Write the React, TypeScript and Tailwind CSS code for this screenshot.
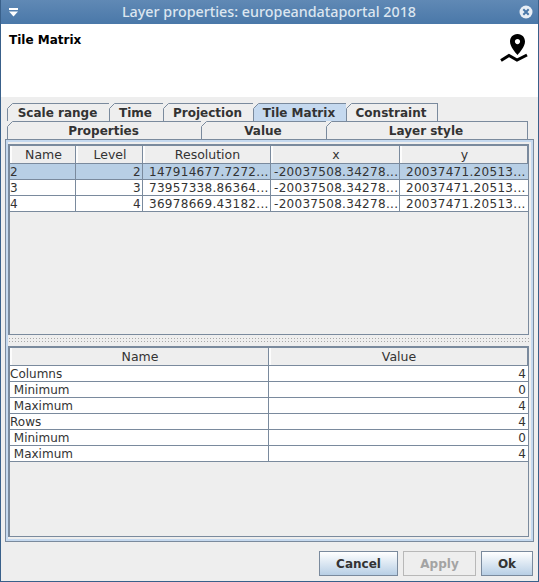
import React from 'react';

const topTabs = [
  { label: 'Scale range', w: 'w-[103px]' },
  { label: 'Time', w: 'w-[55px]' },
  { label: 'Projection', w: 'w-[91px]' },
  { label: 'Tile Matrix', w: 'w-[94px]', active: true },
  { label: 'Constraint', w: 'w-[92px]' },
];

const bottomTabs = [
  { label: 'Properties', w: 'w-[195px]' },
  { label: 'Value', w: 'w-[126px]' },
  { label: 'Layer style', w: 'w-[202px]' },
];

const levels = [
  ['2', '2', '147914677.7272...', '-20037508.34278...', '20037471.20513...'],
  ['3', '3', '73957338.86364...', '-20037508.34278...', '20037471.20513...'],
  ['4', '4', '36978669.43182...', '-20037508.34278...', '20037471.20513...'],
];

const values = [
  ['Columns', '4'],
  ['\u00a0Minimum', '0'],
  ['\u00a0Maximum', '4'],
  ['Rows', '4'],
  ['\u00a0Minimum', '0'],
  ['\u00a0Maximum', '4'],
];

const Tab = ({ label, w, active }: { label: string; w: string; active?: boolean }) => (
  <div
    className={`relative h-[18px] -mr-px flex items-center justify-center border border-b-0 border-[#7a8a9d] pr-[2px] text-[12px] font-bold text-[#333333] ${w} ${
      active ? 'bg-[#c5d9ef]' : 'bg-[#eeeeee]'
    }`}
  >
    <svg className="absolute -left-px -top-px" width="6" height="6" viewBox="0 0 6 6">
      <path d="M0 0H6L0 6Z" fill="#eeeeee" />
      <path d="M0.5 5.5L5.5 0.5" stroke="#7a8a9d" strokeWidth="1" />
    </svg>
    {label}
  </div>
);

const HeaderCell = ({ label, w }: { label: string; w: string }) => (
  <div className={`flex h-full items-center justify-center border-r border-[#7a8a9d] border-l-2 border-l-white/80 pt-[2px] text-[12.5px] text-[#333333] ${w}`}>
    {label}
  </div>
);

const Button = ({ label, w, disabled }: { label: string; w: string; disabled?: boolean }) => (
  <div
    className={`flex h-[25px] items-center justify-center border text-[12px] font-bold ${w} ${
      disabled
        ? 'border-[#b8b8b8] bg-[#eeeeee] text-[#a3a3a3]'
        : 'border-[#7a8a9d] bg-gradient-to-b from-[#ffffff] to-[#b8cfe5] text-[#333333]'
    }`}
  >
    {label}
  </div>
);

export default function App() {
  return (
    <div className="flex h-[582px] w-[539px] flex-col border border-t-0 border-[#39608a] bg-[#eeeeee] font-['DejaVu_Sans',sans-serif]">
      {/* title bar */}
      <div className="flex h-6 shrink-0 items-center justify-between bg-gradient-to-b from-[#6089b5] to-[#4a78a9] pl-2 pr-[5px]">
        <svg width="10" height="9" viewBox="0 0 10 9">
          <rect x="0" y="0" width="9" height="2" fill="#ffffff" />
          <path d="M0 3.5H9L4.5 8.5Z" fill="#ffffff" />
        </svg>
        <span className="text-[14.3px] font-medium text-[#dce6f0] font-['Noto_Sans',sans-serif]">Layer properties: europeandataportal 2018</span>
        <svg width="14" height="14" viewBox="0 0 14 14">
          <circle cx="7" cy="7" r="6.5" fill="#e8eef5" />
          <path d="M4.3 4.3L9.7 9.7M9.7 4.3L4.3 9.7" stroke="#4a78a9" strokeWidth="2" />
        </svg>
      </div>

      {/* header */}
      <div className="flex h-[73px] shrink-0 justify-between bg-white pl-2 pr-[10px] pt-[8px]">
        <span className="text-[12px] font-bold leading-4 text-black">Tile Matrix</span>
        <svg className="mt-[2px]" width="28" height="30" viewBox="0 0 28 30">
          <path
            fillRule="evenodd"
            d="M17.5 0C12.6 0 10 3.8 10 7.6C10 12.5 15 18.5 17.5 21C20 18.5 25 12.5 25 7.6C25 3.8 22.4 0 17.5 0ZM17.5 5C19 5 20.1 6.1 20.1 7.6C20.1 9.1 19 10.2 17.5 10.2C16 10.2 14.9 9.1 14.9 7.6C14.9 6.1 16 5 17.5 5Z"
            fill="#000000"
          />
          <path d="M1 26.5L9 21.5L17 26L27 21" fill="none" stroke="#000000" strokeWidth="3" />
        </svg>
      </div>

      {/* tabs */}
      <div className="flex min-h-0 flex-1 flex-col pl-1 pr-[4px] pt-[6px]">
        <div className="flex pl-[2px]">
          {topTabs.map((t) => (
            <Tab key={t.label} {...t} />
          ))}
        </div>
        <div className="flex pl-[2px]">
          {bottomTabs.map((t) => (
            <Tab key={t.label} {...t} />
          ))}
        </div>

        <div className="flex h-[403px] flex-col border border-[#7a8a9d] bg-[#eeeeee]">
          <div className="flex min-h-0 flex-1 flex-col border-2 border-[#c5d9ef] pr-[2px] pt-[2px] pb-[2px]">
            {/* upper table */}
            <div className="flex h-[191px] shrink-0 flex-col border border-[#7a8a9d] border-t-2 border-l-2">
              <div className="flex h-[18px] shrink-0 border-b border-[#7a8a9d]">
                <HeaderCell label="Name" w="w-[66px]" />
                <HeaderCell label="Level" w="w-[67px]" />
                <HeaderCell label="Resolution" w="w-[128px]" />
                <HeaderCell label="x" w="w-[129px]" />
                <HeaderCell label="y" w="flex-1" />
              </div>
              {levels.map((row, i) => (
                <div
                  key={row[0]}
                  className={`flex h-4 shrink-0 border-b border-[#7a8a9d] text-[12px] leading-[17px] tracking-[0.3px] text-[#333333] ${
                    i === 0 ? 'bg-[#b8cfe5]' : 'bg-white'
                  }`}
                >
                  <div className="w-[66px] border-r border-[#7a8a9d]">{row[0]}</div>
                  <div className="w-[67px] border-r border-[#7a8a9d] pr-px text-right">{row[1]}</div>
                  <div className="w-[128px] border-r border-[#7a8a9d] pl-[6px]">{row[2]}</div>
                  <div className="w-[129px] border-r border-[#7a8a9d] pl-[3px]">{row[3]}</div>
                  <div className="flex-1 pl-[6px]">{row[4]}</div>
                </div>
              ))}
            </div>

            {/* split pane divider */}
            <div className="my-[2px] h-[7px] shrink-0 bg-[radial-gradient(#a8a8a8_0.6px,transparent_0.8px)] bg-[length:3px_3px]" />

            {/* lower table */}
            <div className="flex min-h-0 flex-1 flex-col border border-[#7a8a9d] border-t-2 border-l-2">
              <div className="flex h-[18px] shrink-0 border-b border-[#7a8a9d]">
                <HeaderCell label="Name" w="w-[259px]" />
                <HeaderCell label="Value" w="flex-1" />
              </div>
              {values.map((row, i) => (
                <div key={i} className="flex h-4 shrink-0 border-b border-[#7a8a9d] bg-white text-[12px] leading-[17px] text-[#333333]">
                  <div className="w-[259px] whitespace-pre border-r border-[#7a8a9d]">{row[0]}</div>
                  <div className="flex-1 pr-[2px] text-right">{row[1]}</div>
                </div>
              ))}
            </div>
          </div>
        </div>

        {/* buttons */}
        <div className="flex justify-end gap-[5px] pr-[1px] pt-[9px]">
          <Button label="Cancel" w="w-[79px]" />
          <Button label="Apply" w="w-[73px]" disabled />
          <Button label="Ok" w="w-[52px]" />
        </div>
      </div>
    </div>
  );
}
